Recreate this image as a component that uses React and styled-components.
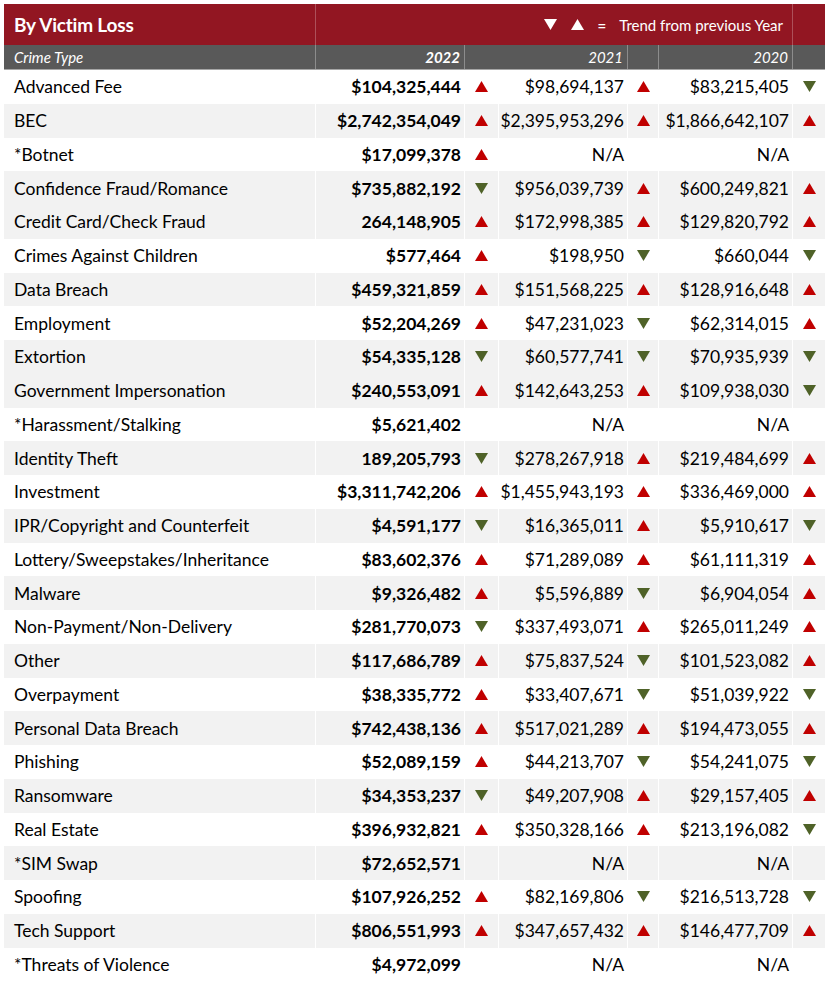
import React from 'react'
import styled, { createGlobalStyle } from 'styled-components'

const GlobalStyle = createGlobalStyle`
  body {
    margin: 0;
    background: #ffffff;
    font-family: Lato, "Open Sans", sans-serif;
  }
`

const COLS = '311px 149px 34px 129px 31px 134px 33px'

const Table = styled.div`
  margin: 4px 0 0 4px;
  width: 821px;
  color: #000;
`

const TitleBar = styled.div`
  display: grid;
  grid-template-columns: 311px 477px 33px;
  height: 41px;
  background: #921622;
  color: #fff;
`

const TitleCell = styled.div`
  display: flex;
  align-items: center;
  justify-content: ${p => (p.$right ? 'flex-end' : 'flex-start')};
  padding: 0 ${p => (p.$right ? '9px' : '10px')};
  border-left: ${p => (p.$first ? 'none' : '1px solid rgba(255,255,255,0.25)')};
  font-size: ${p => (p.$right ? '15px' : '19px')};
  font-weight: ${p => (p.$right ? 400 : 700)};
  letter-spacing: ${p => (p.$right ? '0' : '-0.2px')};
`

const Legend = styled.span`
  display: flex;
  align-items: center;
  gap: 14px;
`

const Equals = styled.span`
  margin-left: -1px;
  margin-right: -1px;
  font-weight: 700;
`

const HeadRow = styled.div`
  display: grid;
  grid-template-columns: 311px 149px 163px 31px 134px 33px;
  height: 25px;
  background: #595959;
  color: #fff;
  border-bottom: 1px solid #a6a6a6;
  box-sizing: border-box;
`

const HeadCell = styled.div`
  display: flex;
  align-items: center;
  justify-content: ${p => (p.$right ? 'flex-end' : 'flex-start')};
  padding: 0 ${p => (p.$right ? '4px' : '10px')};
  border-left: ${p => (p.$first ? 'none' : '1px solid #8c8c8c')};
  font-size: 15px;
  font-style: italic;
  font-weight: ${p => (p.$bold ? 700 : 400)};
`

const Row = styled.div`
  display: grid;
  grid-template-columns: ${COLS};
  height: 33.75px;
  background: ${p => (p.$shade ? '#f2f2f2' : '#ffffff')};
`

const Cell = styled.div`
  display: flex;
  align-items: center;
  justify-content: ${p => (p.$align === 'right' ? 'flex-end' : p.$align === 'center' ? 'center' : 'flex-start')};
  padding: 0 ${p => (p.$align === 'right' ? '3px' : p.$align === 'center' ? '0' : '10px')};
  border-left: ${p => (p.$first ? 'none' : '1px solid #ffffff')};
  font-size: 17.5px;
  font-weight: ${p => (p.$bold ? 700 : 400)};
  white-space: nowrap;
`

const Tri = ({ dir, color, size = 12 }) => (
  <svg width={size} height={size * 0.85} viewBox="0 0 12 10" style={{ display: 'block' }}>
    {dir === 'up'
      ? <polygon points="6,0 12,10 0,10" fill={color} />
      : <polygon points="0,0 12,0 6,10" fill={color} />}
  </svg>
)

const RED = '#c00000'
const GREEN = '#4f6228'

const Arrow = ({ t }) => {
  if (!t) return null
  return <Tri dir={t === 'u' ? 'up' : 'down'} color={t === 'u' ? RED : GREEN} size={13} />
}

// [name, 2022, trend, 2021, trend, 2020, trend, shaded]
const rows = [
  ['Advanced Fee', '$104,325,444', 'u', '$98,694,137', 'u', '$83,215,405', 'd', 0],
  ['BEC', '$2,742,354,049', 'u', '$2,395,953,296', 'u', '$1,866,642,107', 'u', 1],
  ['*Botnet', '$17,099,378', 'u', 'N/A', '', 'N/A', '', 0],
  ['Confidence Fraud/Romance', '$735,882,192', 'd', '$956,039,739', 'u', '$600,249,821', 'u', 1],
  ['Credit Card/Check Fraud', '264,148,905', 'u', '$172,998,385', 'u', '$129,820,792', 'u', 1],
  ['Crimes Against Children', '$577,464', 'u', '$198,950', 'd', '$660,044', 'd', 0],
  ['Data Breach', '$459,321,859', 'u', '$151,568,225', 'u', '$128,916,648', 'u', 1],
  ['Employment', '$52,204,269', 'u', '$47,231,023', 'd', '$62,314,015', 'u', 0],
  ['Extortion', '$54,335,128', 'd', '$60,577,741', 'd', '$70,935,939', 'd', 1],
  ['Government Impersonation', '$240,553,091', 'u', '$142,643,253', 'u', '$109,938,030', 'd', 1],
  ['*Harassment/Stalking', '$5,621,402', '', 'N/A', '', 'N/A', '', 0],
  ['Identity Theft', '189,205,793', 'd', '$278,267,918', 'u', '$219,484,699', 'u', 1],
  ['Investment', '$3,311,742,206', 'u', '$1,455,943,193', 'u', '$336,469,000', 'u', 0],
  ['IPR/Copyright and Counterfeit', '$4,591,177', 'd', '$16,365,011', 'u', '$5,910,617', 'd', 1],
  ['Lottery/Sweepstakes/Inheritance', '$83,602,376', 'u', '$71,289,089', 'u', '$61,111,319', 'u', 0],
  ['Malware', '$9,326,482', 'u', '$5,596,889', 'd', '$6,904,054', 'u', 1],
  ['Non-Payment/Non-Delivery', '$281,770,073', 'd', '$337,493,071', 'u', '$265,011,249', 'u', 0],
  ['Other', '$117,686,789', 'u', '$75,837,524', 'd', '$101,523,082', 'u', 1],
  ['Overpayment', '$38,335,772', 'u', '$33,407,671', 'd', '$51,039,922', 'd', 0],
  ['Personal Data Breach', '$742,438,136', 'u', '$517,021,289', 'u', '$194,473,055', 'u', 1],
  ['Phishing', '$52,089,159', 'u', '$44,213,707', 'd', '$54,241,075', 'd', 0],
  ['Ransomware', '$34,353,237', 'd', '$49,207,908', 'u', '$29,157,405', 'u', 1],
  ['Real Estate', '$396,932,821', 'u', '$350,328,166', 'u', '$213,196,082', 'd', 0],
  ['*SIM Swap', '$72,652,571', '', 'N/A', '', 'N/A', '', 1],
  ['Spoofing', '$107,926,252', 'u', '$82,169,806', 'd', '$216,513,728', 'd', 0],
  ['Tech Support', '$806,551,993', 'u', '$347,657,432', 'u', '$146,477,709', 'u', 1],
  ['*Threats of Violence', '$4,972,099', '', 'N/A', '', 'N/A', '', 0],
]

export default function App() {
  return (
    <>
      <GlobalStyle />
      <Table>
        <TitleBar>
          <TitleCell $first>By Victim Loss</TitleCell>
          <TitleCell $right>
            <Legend>
              <Tri dir="down" color="#fff" size={13} />
              <Tri dir="up" color="#fff" size={13} />
              <Equals>=</Equals>
              <span>Trend from previous Year</span>
            </Legend>
          </TitleCell>
          <TitleCell />
        </TitleBar>
        <HeadRow>
          <HeadCell $first>Crime Type</HeadCell>
          <HeadCell $right $bold>2022</HeadCell>
          <HeadCell $right>2021</HeadCell>
          <HeadCell />
          <HeadCell $right>2020</HeadCell>
          <HeadCell />
        </HeadRow>
        {rows.map(r => (
          <Row key={r[0]} $shade={r[7]}>
            <Cell $first>{r[0]}</Cell>
            <Cell $align="right" $bold>{r[1]}</Cell>
            <Cell $align="center"><Arrow t={r[2]} /></Cell>
            <Cell $align="right">{r[3]}</Cell>
            <Cell $align="center"><Arrow t={r[4]} /></Cell>
            <Cell $align="right">{r[5]}</Cell>
            <Cell $align="center"><Arrow t={r[6]} /></Cell>
          </Row>
        ))}
      </Table>
    </>
  )
}
